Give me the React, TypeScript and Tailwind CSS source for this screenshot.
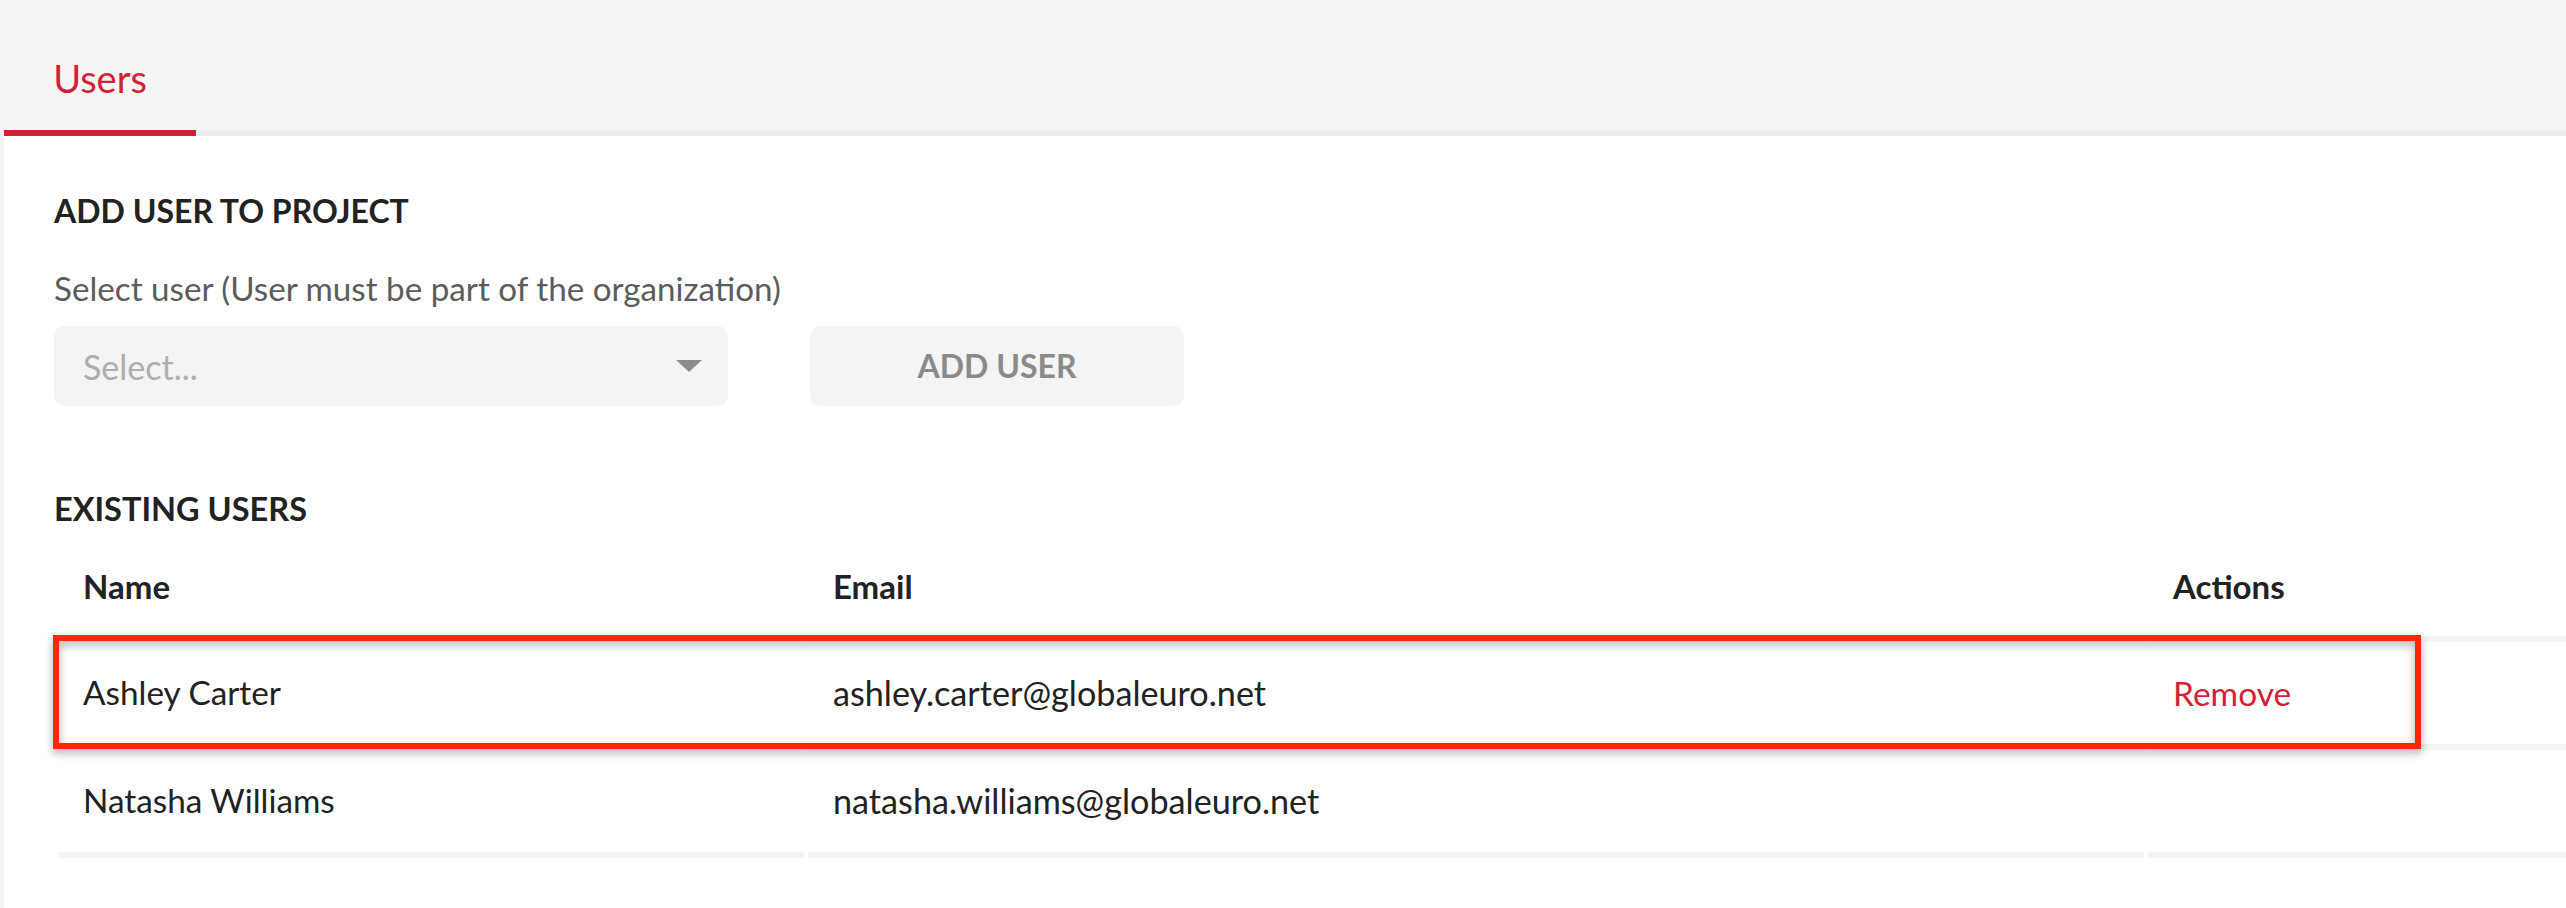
const users = [
  { name: "Ashley Carter", email: "ashley.carter@globaleuro.net", canRemove: true },
  { name: "Natasha Williams", email: "natasha.williams@globaleuro.net", canRemove: false },
];

function Caret() {
  return (
    <svg width="26" height="12" viewBox="0 0 26 12" className="shrink-0">
      <path d="M0 0 H26 L13 12 Z" fill="#8c8c8c" />
    </svg>
  );
}

export default function App() {
  return (
    <div
      className="min-h-screen overflow-hidden bg-[#f5f5f5] pl-1 text-[#222]"
      style={{ fontFamily: "Lato, 'Open Sans', sans-serif" }}
    >
      {/* Tabs */}
      <div className="flex border-b-[6px] border-[#ececec]">
        <div className="-mb-[6px] w-[192px] border-b-[6px] border-[#d81e34] pt-[54px] pb-[28px] text-center text-[38px] leading-[48px] text-[#d81e34]">
          Users
        </div>
      </div>

      {/* Panel */}
      <div className="min-h-[772px] bg-white pl-[50px]">
        <h2 className="pt-[55px] text-[32px] font-bold uppercase leading-[40px]">Add user to project</h2>
        <label className="mt-[37px] block text-[33.2px] leading-[40px] text-[#5c5c5c]">
          Select user (User must be part of the organization)
        </label>
        <div className="mt-[18px] flex items-center gap-[82px]">
          <div className="flex h-[80px] w-[674px] items-center justify-between rounded-[10px] bg-[#f4f4f4] pl-[29px] pr-[26px]">
            <span className="text-[34px] text-[#adadad]">Select...</span>
            <Caret />
          </div>
          <button className="h-[80px] w-[374px] rounded-[10px] bg-[#f4f4f4] text-[32px] font-bold uppercase text-[#8a8a8a]">
            Add user
          </button>
        </div>

        <h2 className="mt-[83px] text-[32.5px] font-bold uppercase leading-[40px]">Existing users</h2>

        <div className="relative mt-[9px]">
          <table className="w-[calc(100%+8px)] border-separate border-spacing-x-1 border-spacing-y-0 text-left">
            <thead>
              <tr>
                <th className="h-[104px] w-[746px] border-b-[6px] border-[#f4f4f4] pl-[25px] text-[33px] font-bold">Name</th>
                <th className="h-[104px] w-[1336px] border-b-[6px] border-[#f4f4f4] pl-[25px] text-[33px] font-bold">Email</th>
                <th className="h-[104px] border-b-[6px] border-[#f4f4f4] pl-[25px] text-[33px] font-bold">Actions</th>
              </tr>
            </thead>
            <tbody>
              {users.map((u) => (
                <tr key={u.email}>
                  <td className="h-[108px] border-b-[6px] border-[#f4f4f4] pl-[25px] text-[33.3px]">{u.name}</td>
                  <td className="h-[108px] border-b-[6px] border-[#f4f4f4] pl-[25px] text-[34.2px]">{u.email}</td>
                  <td className="h-[108px] border-b-[6px] border-[#f4f4f4] pl-[25px] text-[33.5px] text-[#d81e34]">
                    {u.canRemove ? "Remove" : ""}
                  </td>
                </tr>
              ))}
            </tbody>
          </table>

          {/* highlight annotation around first row */}
          <div className="pointer-events-none absolute top-[97px] -left-px h-[114px] w-[2368px] border-[6px] border-[#ff2600] drop-shadow-[0_4px_4px_rgba(0,0,0,0.35)]" />
        </div>
      </div>
    </div>
  );
}
